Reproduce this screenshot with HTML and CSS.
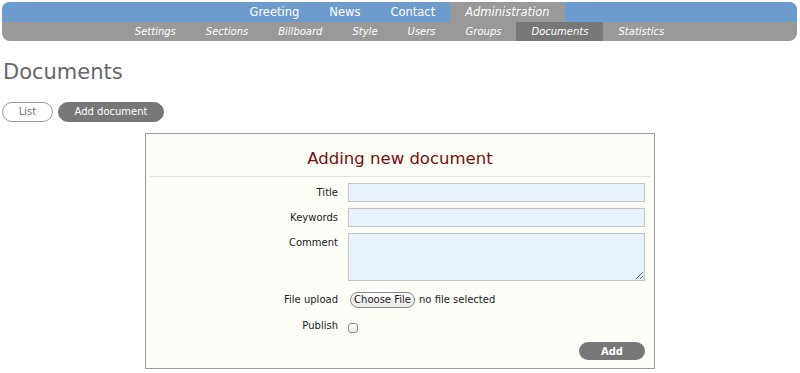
FILE: index.html
```html
<!DOCTYPE html>
<html>
<head>
<meta charset="utf-8">
<link rel="stylesheet" href="styles.css">
</head>
<body>
<nav class="nav">
  <ul class="menu">
    <li><a href="#">Greeting</a></li>
    <li><a href="#">News</a></li>
    <li><a href="#">Contact</a></li>
    <li class="active"><a href="#">Administration</a></li>
  </ul>
  <ul class="submenu">
    <li><a href="#">Settings</a></li>
    <li><a href="#">Sections</a></li>
    <li><a href="#">Billboard</a></li>
    <li><a href="#">Style</a></li>
    <li><a href="#">Users</a></li>
    <li><a href="#">Groups</a></li>
    <li class="active"><a href="#">Documents</a></li>
    <li><a href="#">Statistics</a></li>
  </ul>
</nav>
<h1 class="page-title">Documents</h1>
<div class="tabs">
  <a class="tab" href="#">List</a>
  <a class="tab tab-active" href="#">Add document</a>
</div>
<form class="panel">
  <h2 class="panel-title">Adding new document</h2>
  <div class="fields">
    <label class="lbl">Title</label>
    <input class="inp" type="text">
    <label class="lbl">Keywords</label>
    <input class="inp" type="text">
    <label class="lbl">Comment</label>
    <textarea class="txt"></textarea>
    <label class="lbl lbl-file">File upload</label>
    <div class="file"><button type="button" class="file-btn">Choose File</button><span class="file-name">no file selected</span></div>
    <label class="lbl lbl-pub">Publish</label>
    <div class="pub"><input type="checkbox" class="chk"></div>
  </div>
  <div class="actions"><button type="button" class="add-btn">Add</button></div>
</form>
</body>
</html>
```
FILE: styles.css
```css
* { box-sizing: border-box; }
body {
  margin: 2px;
  font-family: "DejaVu Sans", Verdana, sans-serif;
  background: #fff;
  color: #333;
}
.nav {
  margin-right: 1px;
  border-radius: 8px;
  overflow: hidden;
  background: #999;
}
.nav ul { list-style: none; margin: 0; padding: 0; display: flex; justify-content: center; }
.nav a { color: #fff; text-decoration: none; display: block; }
.menu { background: #6c9cce; height: 20px; }
.menu li a { font-size: 11.5px; line-height: 20px; padding: 0 15px; }
.menu li.active a { background: #999; font-style: italic; }
.submenu { height: 19px; }
.submenu li a { font-size: 10px; font-style: italic; line-height: 19px; padding: 0 15px; }
.submenu li.active a { background: #777; }

.page-title {
  margin: 19px 0 0 1px;
  font-size: 21px;
  line-height: 25px;
  font-weight: normal;
  color: #666;
}
.tabs { display: flex; gap: 5px; margin-top: 17px; }
.tab {
  display: block;
  height: 20px;
  line-height: 18px;
  border: 1px solid #999;
  border-radius: 10px;
  font-size: 10px;
  color: #777;
  text-decoration: none;
  text-align: center;
  width: 51px;
}
.tab-active { width: 106px; background: #777; border-color: #777; color: #fff; }

.panel {
  width: 510px;
  margin: 11px auto 0;
  border: 1px solid #9a9a9a;
  background: #fdfdf8;
  padding: 0 4px 8px;
}
.panel-title {
  margin: 0;
  padding: 13px 0 6px;
  font-size: 16.5px;
  line-height: 23px;
  font-weight: normal;
  text-align: center;
  color: #7a0c0c;
  border-bottom: 1px solid #e4e4da;
}
.fields {
  display: grid;
  grid-template-columns: 188px 297px;
  column-gap: 10px;
  row-gap: 6px;
  margin-top: 6px;
}
.lbl {
  font-size: 10px;
  line-height: 19px;
  text-align: right;
  color: #222;
}
.inp, .txt {
  display: block;
  width: 297px;
  height: 19px;
  margin: 0;
  border: 1px solid #c4c4c4;
  background: #e7f2fc;
  font: 11px "DejaVu Sans", sans-serif;
}
.txt { height: 48px; resize: both; }
.lbl-file { margin-top: 2px; line-height: 21px; }
.file { margin-top: 2px; display: flex; align-items: center; height: 21px; gap: 4px; }
.file-btn {
  margin: 0 0 0 2px;
  height: 16px;
  width: 65px;
  padding: 0;
  border: 1px solid #8a8a8a;
  border-radius: 8px;
  background: linear-gradient(#fff, #e8e8e8);
  font: 10px "DejaVu Sans", sans-serif;
  color: #222;
}
.file-name { font-size: 10px; color: #222; }
.pub { display: flex; align-items: flex-start; padding-top: 7px; height: 19px; }
.chk {
  appearance: none;
  -webkit-appearance: none;
  margin: 0;
  width: 10px;
  height: 10px;
  border: 1px solid #8a8a8a;
  border-radius: 3px;
  background: linear-gradient(#fff, #e9e9e9);
}
.actions { display: flex; justify-content: flex-end; padding-right: 5px; margin-top: 7px; }
.add-btn {
  width: 66px;
  height: 18px;
  padding: 0;
  border: 0;
  border-radius: 9px;
  background: #777;
  color: #fff;
  font: bold 10px "DejaVu Sans", sans-serif;
}
```
